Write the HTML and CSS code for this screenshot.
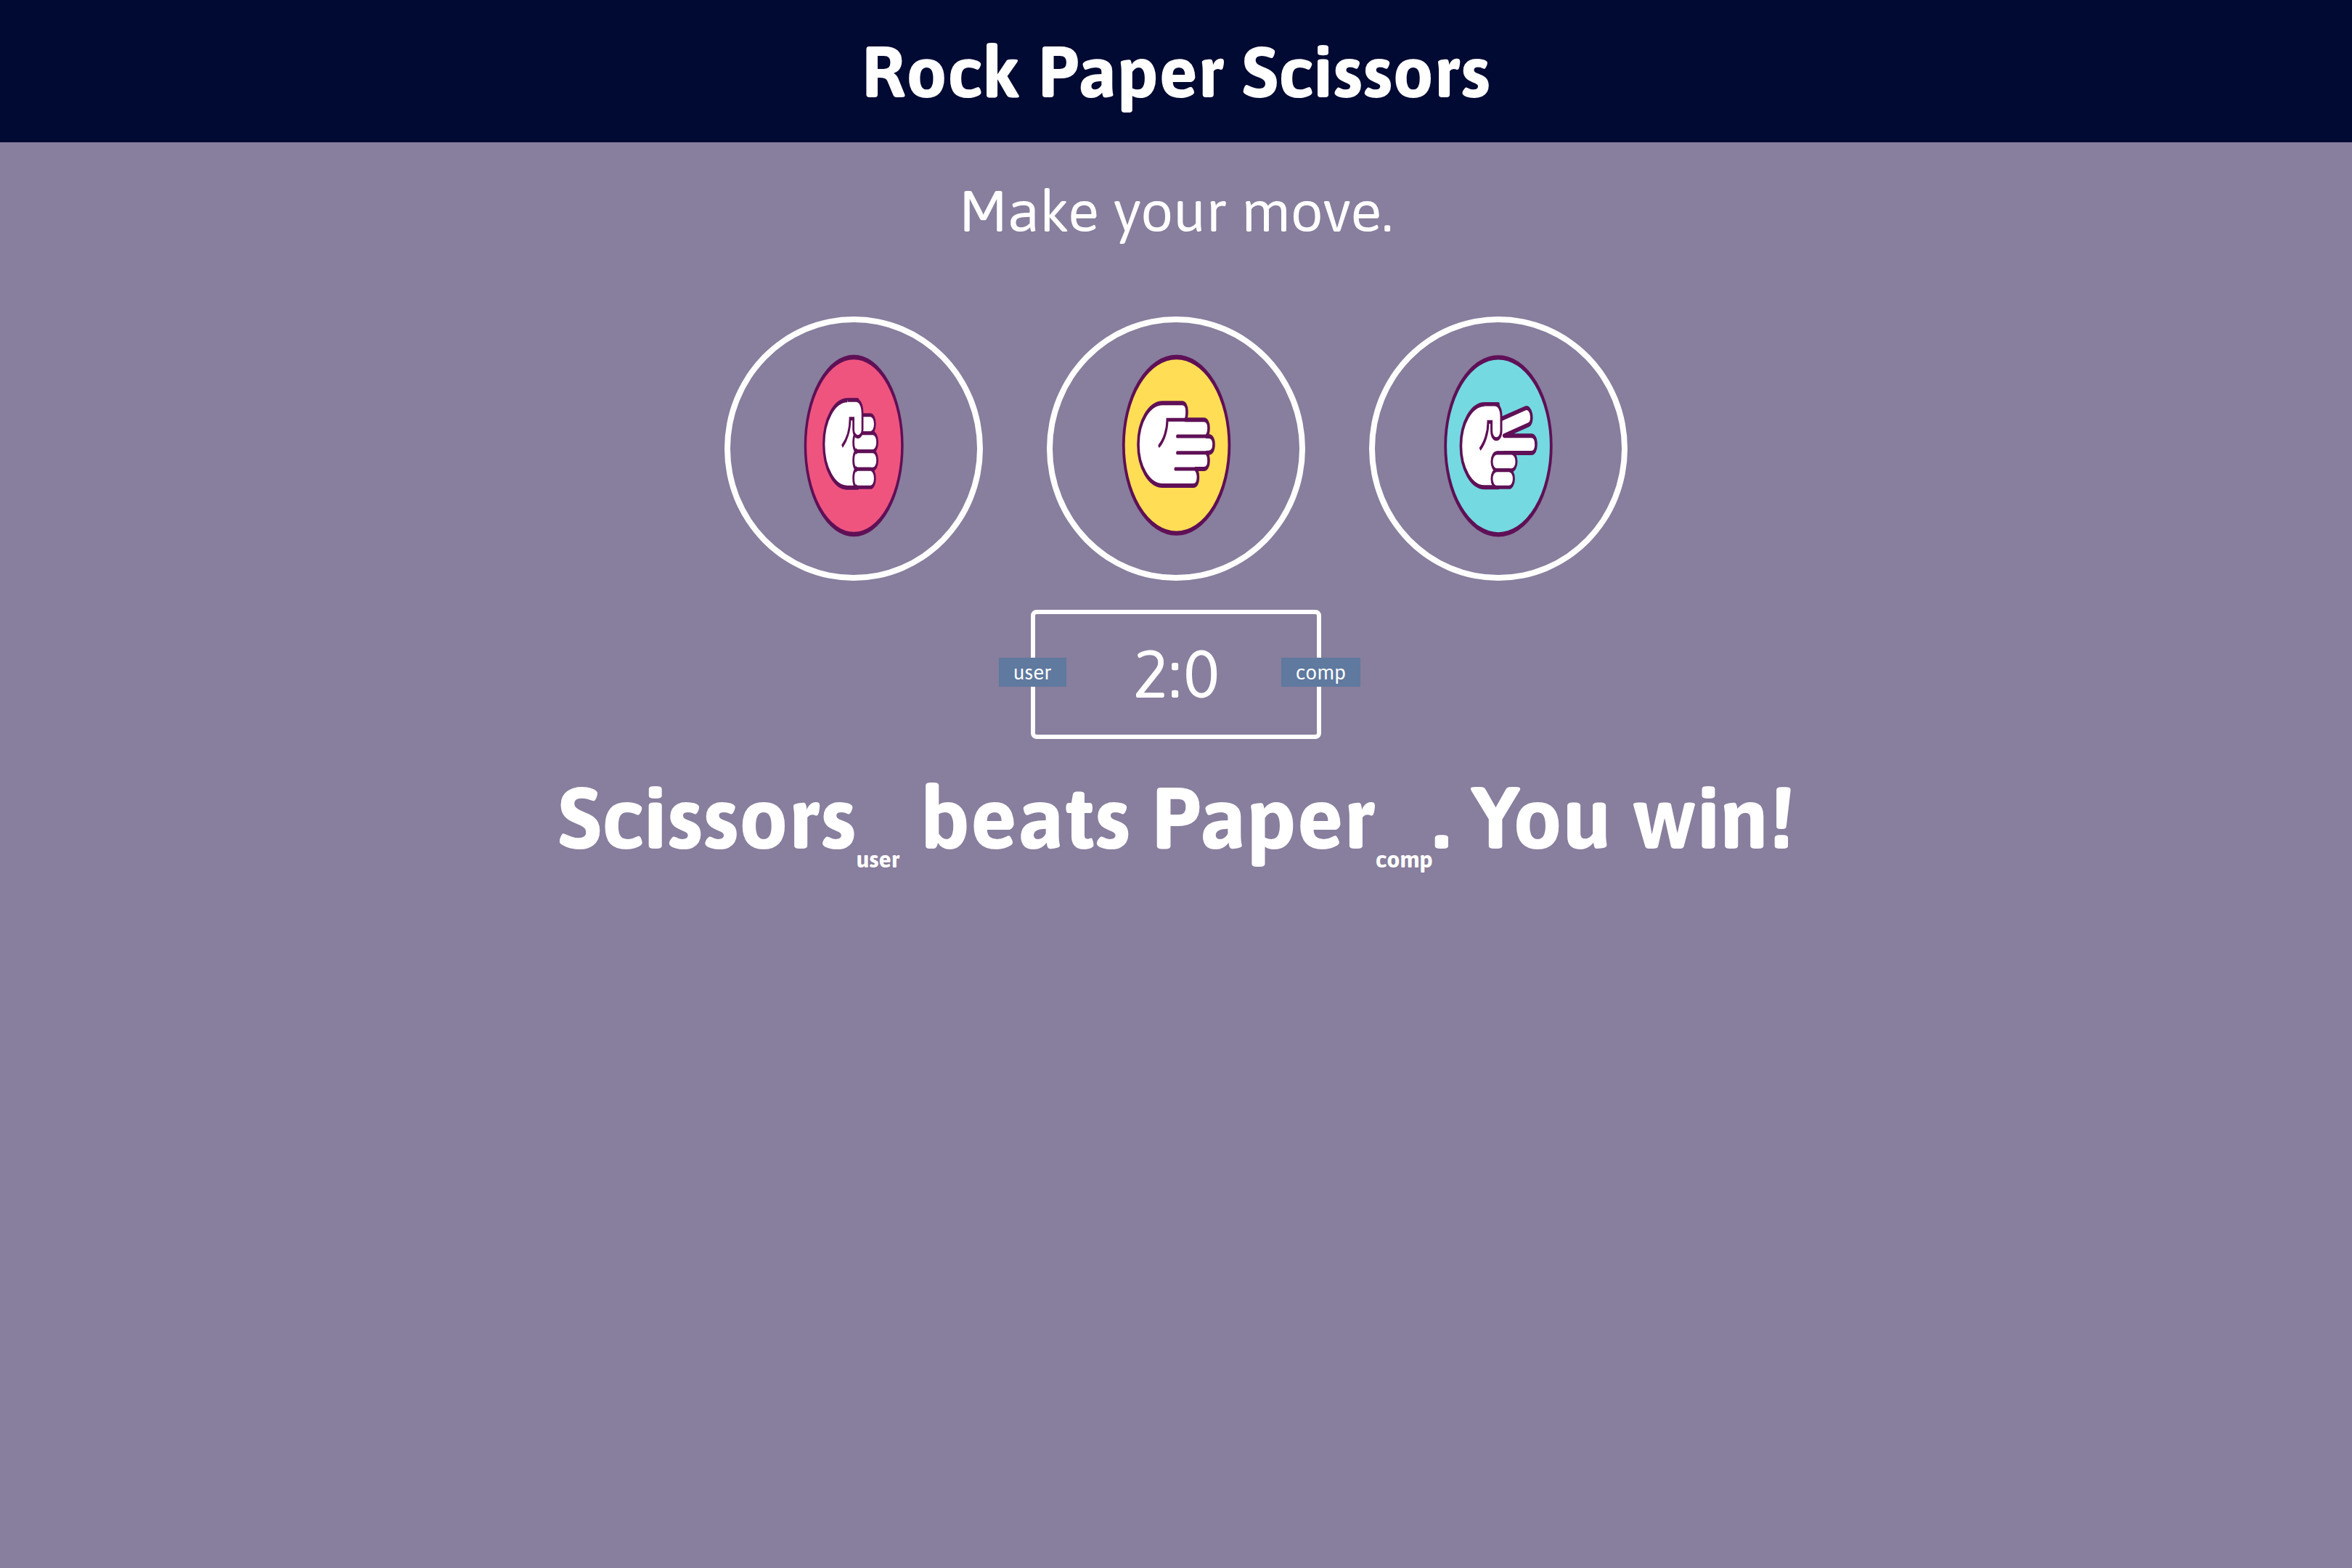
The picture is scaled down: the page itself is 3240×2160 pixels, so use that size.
FILE: index.html
```html
<!DOCTYPE html>
<html lang="en">
<head>
<meta charset="utf-8">
<title>Rock Paper Scissors</title>
<link rel="stylesheet" href="styles.css">
</head>
<body>
<header class="header">
  <h1 class="title">Rock Paper Scissors</h1>
</header>
<main class="game">
  <p class="prompt">Make your move.</p>
  <div class="choices">
    <button class="choice" type="button" aria-label="Rock">
      <svg class="hand" viewBox="78 72 1020 1044" aria-hidden="true">
        <g transform="scale(.55 1)">
          <ellipse class="disc disc-rock" cx="1070" cy="582" rx="364" ry="366"/>
          <path class="outline" d="M1100 394H1022C924 394 844 476 844 575C844 675 924 755 1018 755H1100Z"/>
          <g class="finger">
            <rect x="1080" y="455" width="149" height="75" rx="34" ry="37"/>
            <rect x="1067" y="530" width="180" height="75" rx="34" ry="37"/>
            <rect x="1067" y="605" width="180" height="74" rx="34" ry="37"/>
            <rect x="1067" y="679" width="162" height="75" rx="34" ry="37"/>
          </g>
          <path class="palm" d="M1010 420H1080V530C1062 550 1062 585 1085 605C1062 620 1062 665 1085 679C1062 695 1062 730 1075 745H1018L940 640Z"/>
          <path class="finger" d="M1085 530C1061 545 1061 590 1085 605C1061 620 1061 664 1085 679C1061 694 1061 739 1085 754"/>
          <path class="finger" d="M1022 394H1085C1115 394 1135 415 1135 450V515A34 30 0 0 1 1067 515V470H1042C1042 520 1015 560 982 585"/>
        </g>
      </svg>
    </button>
    <button class="choice" type="button" aria-label="Paper">
      <svg class="hand" viewBox="90 72 1020 1044" aria-hidden="true">
        <g transform="scale(.6 1)">
          <ellipse class="disc disc-paper" cx="1003" cy="580" rx="364" ry="364"/>
          <path class="outline" d="M1042 406H908C815 406 740 482 740 577C740 671 815 747 908 747H1120C1140 747 1152 735 1152 712C1152 695 1145 685 1135 678H1192C1212 678 1225 665 1225 645C1225 630 1220 618 1210 611H1225C1248 611 1260 598 1260 577C1260 556 1248 543 1225 543H1210C1220 536 1225 524 1225 508C1225 488 1212 475 1192 475H1065C1072 468 1075 455 1075 440C1075 419 1062 406 1042 406Z"/>
          <path class="crease" d="M1065 475H940C940 520 915 560 885 582M1008 543H1225M1008 611H1225M995 678H1192"/>
        </g>
      </svg>
    </button>
    <button class="choice" type="button" aria-label="Scissors">
      <svg class="hand" viewBox="102 72 1020 1044" aria-hidden="true">
        <g transform="scale(.6 1)">
          <ellipse class="disc disc-scissors" cx="1020" cy="583" rx="364" ry="366"/>
          <path class="outline" d="M1020 411H925C836 411 762 487 762 583C762 678 836 754 925 754H1020Z"/>
          <path class="outline" d="M1030 474L1206 427C1247 417 1266 482 1230 495L1058 541H1247C1269 541 1280 555 1280 577C1280 598 1269 612 1247 612H1000"/>
          <path class="palm" d="M925 430H1030V535L1058 549V604H1008L990 740H925L850 600Z"/>
          <g class="finger">
            <rect x="975" y="612" width="170" height="71" rx="34" ry="35"/>
            <rect x="975" y="683" width="152" height="71" rx="34" ry="35"/>
          </g>
          <path class="finger" d="M925 411H995C1022 411 1040 430 1040 462V520C1040 566 973 566 973 520V484H950C950 530 925 572 893 597"/>
        </g>
      </svg>
    </button>
  </div>
  <section class="score" aria-label="Score">
    <span class="badge badge-user">user</span>
    <span class="badge badge-comp">comp</span>
    <span>2:0</span>
  </section>
  <p class="result">Scissors<sub class="who">user</sub> beats Paper<sub class="who">comp</sub>. You win!</p>
</main>
</body>
</html>
```
FILE: styles.css
```css
* {
  box-sizing: border-box;
  margin: 0;
  padding: 0;
}

body {
  min-height: 100vh;
  background: #887e9d;
  color: #fff;
  font-family: Asap, Lato, sans-serif;
  font-weight: 450;
  text-align: center;
}

.header {
  padding: 38px 0;
  background: #000a32;
}

.title {
  font-size: 100px;
  font-weight: 750;
  line-height: 120px;
}

.game {
  display: flex;
  flex-direction: column;
  align-items: center;
}

.prompt {
  margin: 46px 0 98px;
  font-size: 80px;
  line-height: 96px;
}

.choices {
  display: flex;
  gap: 88px;
}

.choice {
  width: 356px;
  height: 364px;
  border: 8px solid #fff;
  border-radius: 50%;
  background: none;
  cursor: pointer;
}

.hand {
  display: block;
  width: 100%;
  height: 100%;
}

.disc {
  stroke: #5f1056;
  stroke-width: 19;
}

.disc-rock {
  fill: #ef547f;
}

.disc-paper {
  fill: #ffdd55;
}

.disc-scissors {
  fill: #74d9e0;
}

.outline {
  fill: #fff;
  stroke: #5f1056;
  stroke-width: 18;
  stroke-linejoin: round;
}

.finger {
  fill: #fff;
  stroke: #5f1056;
  stroke-width: 15;
}

.palm {
  fill: #fff;
}

.crease {
  fill: none;
  stroke: #5f1056;
  stroke-width: 15;
  stroke-linecap: round;
}

.score {
  position: relative;
  width: 400px;
  margin-top: 40px;
  padding: 22px 0 24px;
  border: 6px solid #fff;
  border-radius: 8px;
  font-size: 92px;
  line-height: 120px;
}

.badge {
  position: absolute;
  top: 60px;
  padding: 0 20px;
  background: #5f799f;
  font-size: 28px;
  line-height: 40px;
}

.badge-user {
  left: -50px;
}

.badge-comp {
  right: -60px;
}

.result {
  margin-top: 48px;
  font-size: 120px;
  font-weight: 750;
  line-height: 120px;
}

.who {
  font-size: 32px;
  line-height: 0;
  vertical-align: -26px;
}
```
